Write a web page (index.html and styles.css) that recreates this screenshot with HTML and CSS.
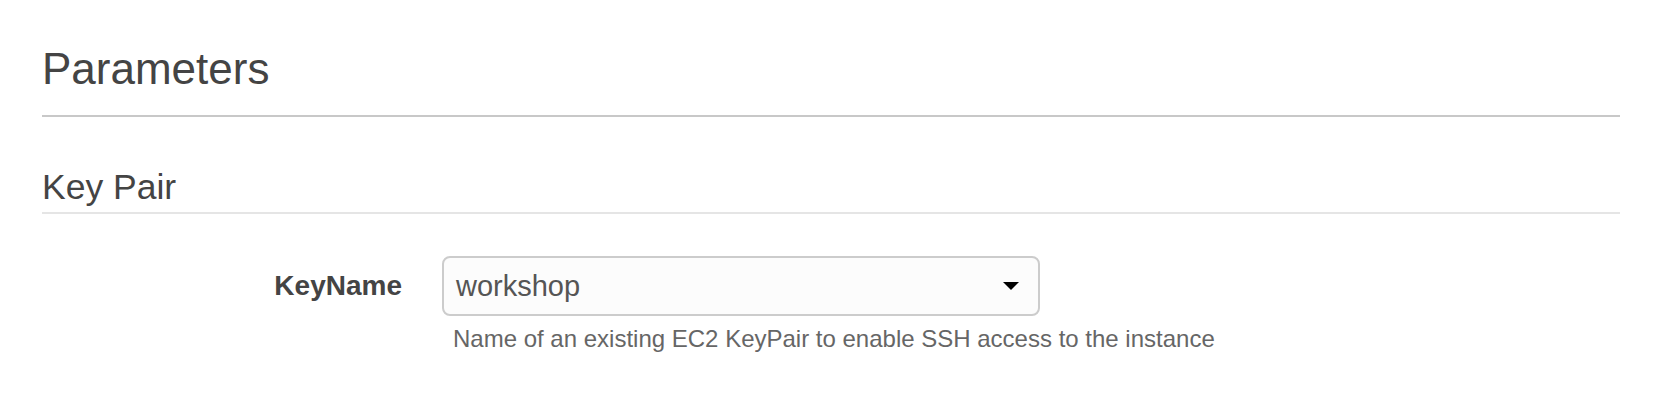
FILE: index.html
```html
<!DOCTYPE html>
<html lang="en">
<head>
<meta charset="utf-8">
<title>Parameters</title>
<link rel="stylesheet" href="styles.css">
</head>
<body>
<div class="page">
  <h2 class="title">Parameters</h2>
  <section class="group">
    <h3 class="group-title">Key Pair</h3>
    <div class="field">
      <label class="field-label" for="keyname">KeyName</label>
      <div class="field-control">
        <div class="select" id="keyname">
          <span class="select-value">workshop</span>
          <svg class="select-arrow" width="16" height="8" viewBox="0 0 16 8"><path d="M0 0H16L8 8Z" fill="#000"/></svg>
        </div>
        <div class="help">Name of an existing EC2 KeyPair to enable SSH access to the instance</div>
      </div>
    </div>
  </section>
</div>
</body>
</html>
```
FILE: styles.css
```css
html, body {
  margin: 0;
  padding: 0;
  background: #fff;
}
body {
  font-family: "Liberation Sans", Arial, Helvetica, sans-serif;
  color: #444;
}
.page {
  padding: 44px 46px 0 42px;
}
.title {
  margin: 0;
  font-size: 44px;
  line-height: 50px;
  font-weight: normal;
  color: #444;
  padding-bottom: 21px;
  border-bottom: 2px solid #c8c8c8;
}
.group {
  padding-top: 49px;
}
.group-title {
  margin: 0;
  font-size: 35.5px;
  line-height: 42px;
  font-weight: normal;
  color: #444;
  padding-bottom: 4px;
  border-bottom: 2px solid #e5e5e5;
}
.field {
  display: flex;
  align-items: flex-start;
  gap: 40px;
  margin-top: 42px;
}
.field-label {
  width: 360px;
  flex: none;
  text-align: right;
  font-weight: bold;
  font-size: 28px;
  line-height: 34px;
  color: #444;
  padding-top: 13px;
}
.field-control {
  display: flex;
  flex-direction: column;
}
.select {
  box-sizing: border-box;
  width: 598px;
  height: 60px;
  border: 2px solid #cccccc;
  border-radius: 8px;
  background: #fcfcfc;
  display: flex;
  align-items: center;
  justify-content: space-between;
  padding: 0 19px 0 12px;
}
.select-value {
  font-size: 29px;
  line-height: 34px;
  color: #555;
}
.select-arrow {
  display: block;
}
.help {
  margin-top: 9px;
  padding-left: 11px;
  font-size: 24px;
  line-height: 28px;
  color: #666;
}
```
